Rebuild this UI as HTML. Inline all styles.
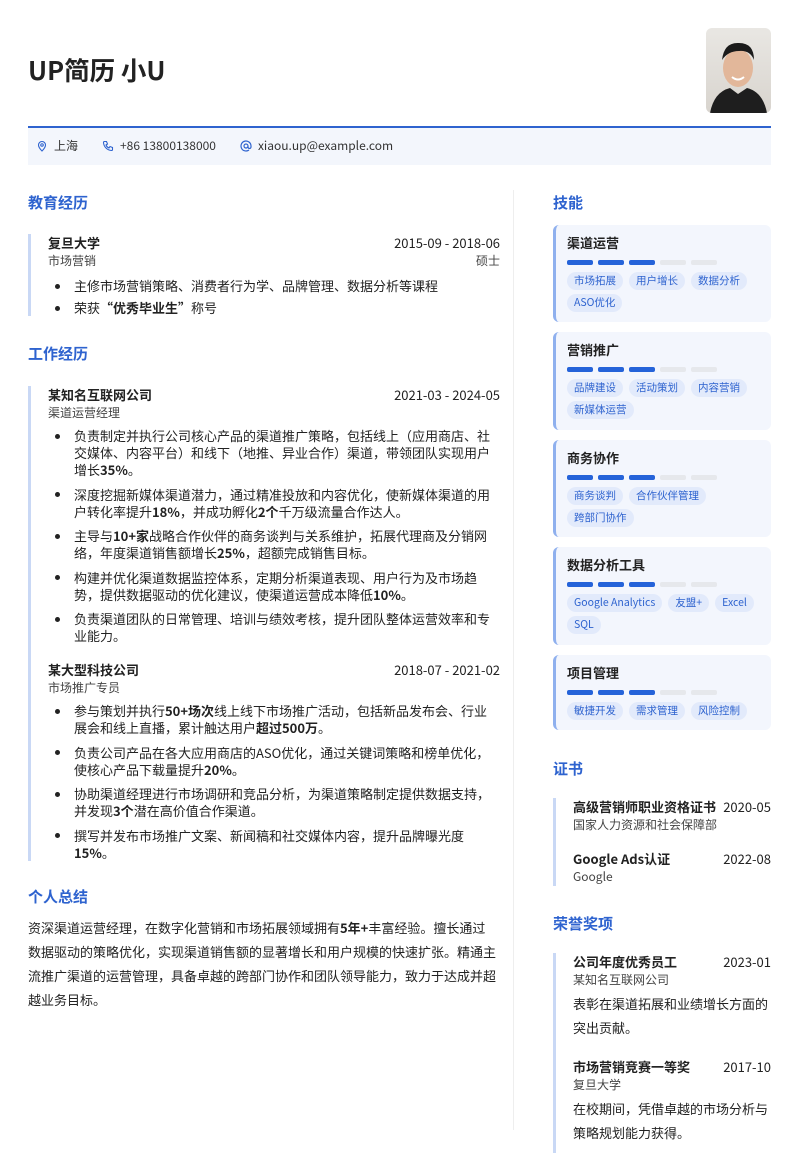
<!DOCTYPE html>
<html><head><meta charset="utf-8"><style>
*{margin:0;padding:0;box-sizing:border-box}
body{width:799px;height:1130px;overflow:hidden;background:#fff;font-family:"Noto Sans CJK SC","Liberation Sans",sans-serif;color:#222;position:relative;font-size:13px;line-height:1.4}
.abs{position:absolute}
h1{position:absolute;left:28px;top:52px;font-size:25.5px;font-weight:700;color:#222;line-height:36px}
.photo{left:706px;top:28px;width:65px;height:85px;border-radius:6px;background:linear-gradient(#e9e7e3,#d8d4ce);overflow:hidden}
.bar{left:28px;top:126px;width:743px;height:2px;background:#2e63cf}
.contact{left:28px;top:128px;width:743px;height:37px;background:#f3f6fc;font-size:12px;color:#333;display:flex;align-items:center;padding-left:8px}
.contact span{display:flex;align-items:center;margin-right:24px}
.contact svg{margin-right:6px}
.h2{font-size:15px;font-weight:700;color:#2e63cf;line-height:21px}
.vline{left:513px;top:190px;width:1px;height:940px;background:#eee}
.ent{border-left:3px solid #c9d8f5;padding-left:17px}
.row{display:flex;justify-content:space-between;line-height:18px}
.nm{font-weight:700;font-size:13px}
.sub{font-size:12px;color:#444;line-height:17px}
ul{list-style:none}
li{position:relative;padding-left:26px;line-height:17px;margin-bottom:7.5px}
li:before{content:"";position:absolute;left:7px;top:6.5px;width:5px;height:5px;border-radius:50%;background:#222}
.card{position:absolute;left:553px;width:218px;background:#f3f6fd;border-left:3px solid #8fb0ee;border-radius:6px;padding:8px 0 0 11px}
.card .t{font-weight:700;font-size:13px;height:20px;line-height:20px}
.lv{display:flex;gap:5px;margin:7px 0 7px}
.lv i{display:block;width:26px;height:5px;border-radius:2px;background:#2563d9}
.lv i.e{background:#e6e8ec}
.tags{display:flex;flex-wrap:wrap;gap:4px 6px}
.tag{font-size:10.5px;color:#2e63cf;background:#e2eafb;border-radius:9px;padding:2px 7px;line-height:14px}
b{font-weight:700}
</style></head><body>
<h1>UP简历 小U</h1>
<div class="abs photo"><svg width="65" height="85" viewBox="0 0 65 85"><ellipse cx="32" cy="40" rx="15" ry="19" fill="#e2b79a"/><path d="M16 32 Q18 14 33 15 Q48 15 48 32 Q44 22 33 23 Q22 23 16 32Z" fill="#1b1b1b"/><path d="M4 85 Q8 64 24 60 L32 66 L41 60 Q57 64 61 85Z" fill="#1e1e1e"/><path d="M26 49 Q32 54 38 49" stroke="#fff" stroke-width="2" fill="none"/></svg></div>
<div class="abs bar"></div>
<div class="abs contact">
<span><svg width="12" height="12" viewBox="0 0 24 24" fill="none" stroke="#2e63cf" stroke-width="2.2"><path d="M12 22s-7-7-7-12a7 7 0 0 1 14 0c0 5-7 12-7 12z"/><circle cx="12" cy="10" r="2.5"/></svg>上海</span>
<span><svg width="12" height="12" viewBox="0 0 24 24" fill="none" stroke="#2e63cf" stroke-width="2.2"><path d="M5 3h4l2 5-3 2a11 11 0 0 0 6 6l2-3 5 2v4a2 2 0 0 1-2 2A17 17 0 0 1 3 5a2 2 0 0 1 2-2z"/></svg>+86 13800138000</span>
<span><svg width="12" height="12" viewBox="0 0 24 24" fill="none" stroke="#2e63cf" stroke-width="2.4"><circle cx="12" cy="12" r="4"/><path d="M16 12v2a3 3 0 0 0 6 0v-2a10 10 0 1 0-4 8"/></svg>xiaou.up@example.com</span>
</div>
<div class="abs vline"></div>

<div class="abs" style="left:28px;top:192px;width:472px">
<div class="h2">教育经历</div>
<div class="ent" style="margin-top:21px">
<div class="row"><span class="nm">复旦大学</span><span>2015-09 - 2018-06</span></div>
<div class="row sub" style="line-height:17px"><span>市场营销</span><span>硕士</span></div>
<ul style="margin-top:8px"><li style="margin-bottom:5px">主修市场营销策略、消费者行为学、品牌管理、数据分析等课程</li><li style="margin-bottom:4px">荣获<b>“优秀毕业生”</b>称号</li></ul>
</div>
<div class="h2" style="margin-top:27px">工作经历</div>
<div class="ent" style="margin-top:22px">
<div class="row"><span class="nm">某知名互联网公司</span><span>2021-03 - 2024-05</span></div>
<div class="sub">渠道运营经理</div>
<ul style="margin-top:6px">
<li>负责制定并执行公司核心产品的渠道推广策略，包括线上（应用商店、社交媒体、内容平台）和线下（地推、异业合作）渠道，带领团队实现用户增长<b>35%</b>。</li>
<li>深度挖掘新媒体渠道潜力，通过精准投放和内容优化，使新媒体渠道的用户转化率提升<b>18%</b>，并成功孵化<b>2个</b>千万级流量合作达人。</li>
<li>主导与<b>10+家</b>战略合作伙伴的商务谈判与关系维护，拓展代理商及分销网络，年度渠道销售额增长<b>25%</b>，超额完成销售目标。</li>
<li>构建并优化渠道数据监控体系，定期分析渠道表现、用户行为及市场趋势，提供数据驱动的优化建议，使渠道运营成本降低<b>10%</b>。</li>
<li>负责渠道团队的日常管理、培训与绩效考核，提升团队整体运营效率和专业能力。</li>
</ul>
<div class="row" style="margin-top:17px"><span class="nm">某大型科技公司</span><span>2018-07 - 2021-02</span></div>
<div class="sub">市场推广专员</div>
<ul style="margin-top:6px">
<li>参与策划并执行<b>50+场次</b>线上线下市场推广活动，包括新品发布会、行业展会和线上直播，累计触达用户<b>超过500万</b>。</li>
<li>负责公司产品在各大应用商店的ASO优化，通过关键词策略和榜单优化，使核心产品下载量提升<b>20%</b>。</li>
<li>协助渠道经理进行市场调研和竞品分析，为渠道策略制定提供数据支持，并发现<b>3个</b>潜在高价值合作渠道。</li>
<li style="margin-bottom:4px">撰写并发布市场推广文案、新闻稿和社交媒体内容，提升品牌曝光度<b>15%</b>。</li>
</ul>
</div>
<div class="h2" style="margin-top:25px">个人总结</div>
<p style="margin-top:9px;line-height:24px;width:470px">资深渠道运营经理，在数字化营销和市场拓展领域拥有<b>5年+</b>丰富经验。擅长通过数据驱动的策略优化，实现渠道销售额的显著增长和用户规模的快速扩张。精通主流推广渠道的运营管理，具备卓越的跨部门协作和团队领导能力，致力于达成并超越业务目标。</p>
</div>

<div class="abs h2" style="left:553px;top:192px">技能</div>
<div class="card" style="top:225px;height:97px"><div class="t">渠道运营</div><div class="lv"><i></i><i></i><i></i><i class="e"></i><i class="e"></i></div><div class="tags"><span class="tag">市场拓展</span><span class="tag">用户增长</span><span class="tag">数据分析</span><span class="tag">ASO优化</span></div></div>
<div class="card" style="top:332px;height:98px"><div class="t">营销推广</div><div class="lv"><i></i><i></i><i></i><i class="e"></i><i class="e"></i></div><div class="tags"><span class="tag">品牌建设</span><span class="tag">活动策划</span><span class="tag">内容营销</span><span class="tag">新媒体运营</span></div></div>
<div class="card" style="top:440px;height:97px"><div class="t">商务协作</div><div class="lv"><i></i><i></i><i></i><i class="e"></i><i class="e"></i></div><div class="tags"><span class="tag">商务谈判</span><span class="tag">合作伙伴管理</span><span class="tag">跨部门协作</span></div></div>
<div class="card" style="top:547px;height:98px"><div class="t">数据分析工具</div><div class="lv"><i></i><i></i><i></i><i class="e"></i><i class="e"></i></div><div class="tags"><span class="tag">Google Analytics</span><span class="tag">友盟+</span><span class="tag">Excel</span><span class="tag">SQL</span></div></div>
<div class="card" style="top:655px;height:75px"><div class="t">项目管理</div><div class="lv"><i></i><i></i><i></i><i class="e"></i><i class="e"></i></div><div class="tags"><span class="tag">敏捷开发</span><span class="tag">需求管理</span><span class="tag">风险控制</span></div></div>

<div class="abs h2" style="left:553px;top:758px">证书</div>
<div class="abs ent" style="left:553px;top:798px;width:218px;height:88px">
<div class="row"><span class="nm">高级营销师职业资格证书</span><span>2020-05</span></div>
<div class="sub">国家人力资源和社会保障部</div>
<div class="row" style="margin-top:17px"><span class="nm">Google Ads认证</span><span>2022-08</span></div>
<div class="sub">Google</div>
</div>
<div class="abs h2" style="left:553px;top:913px">荣誉奖项</div>
<div class="abs ent" style="left:553px;top:953px;width:218px;height:200px">
<div class="row"><span class="nm">公司年度优秀员工</span><span>2023-01</span></div>
<div class="sub">某知名互联网公司</div>
<p style="margin-top:4px;line-height:24px">表彰在渠道拓展和业绩增长方面的突出贡献。</p>
<div class="row" style="margin-top:18px"><span class="nm">市场营销竞赛一等奖</span><span>2017-10</span></div>
<div class="sub">复旦大学</div>
<p style="margin-top:4px;line-height:24px">在校期间，凭借卓越的市场分析与策略规划能力获得。</p>
</div>
</body></html>
